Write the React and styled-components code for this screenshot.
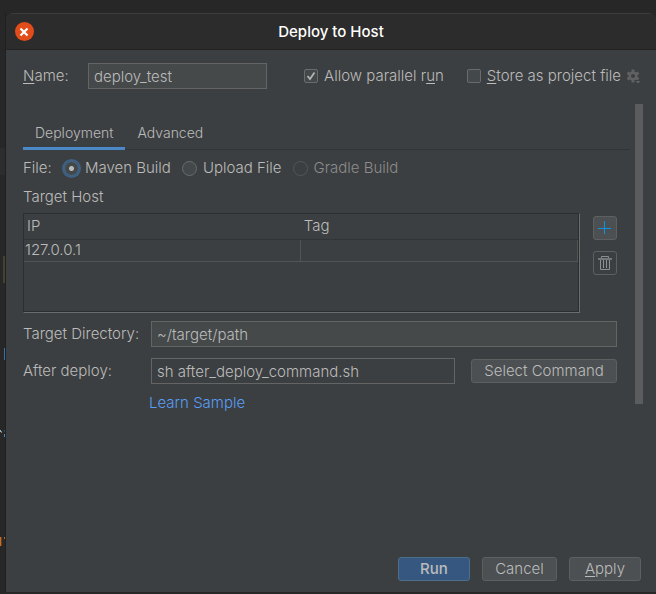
import React, { useState } from 'react';
import styled, { createGlobalStyle } from 'styled-components';

const App = () => {
  const [source, setSource] = useState('maven');
  const [tab, setTab] = useState('deployment');

  return (
    <Desktop>
      <GlobalStyle />
      <Gutter aria-hidden='true'>
        <CaretRow />
        <Change />
        <Selection />
        <svg width='6' height='140' viewBox='0 0 6 140'>
          <path d='M0 1H1V3H0Z' fill='#8fb4c4' />
          <path d='M1 2H2V4H1Z' fill='#7d8a72' />
          <path d='M4 1H5V3H4Z' fill='#2a4a70' />
          <path d='M4 5H5V8H4Z' fill='#4a88c7' />
          <path d='M0 108H1V117H0Z' fill='#c07028' />
          <path d='M1 108H2V117H1Z' fill='#6b3a1c' />
          <path d='M4 108H5V110H4Z' fill='#a5702c' />
        </svg>
      </Gutter>
      <Dialog role='dialog' aria-labelledby='dialog-title'>
        <TitleBar>
          <CloseButton type='button' aria-label='Close'>
            <svg width='10' height='10' viewBox='0 0 10 10'>
              <path d='M1.5 1.5L8.5 8.5M8.5 1.5L1.5 8.5' stroke='#fff' strokeWidth='2.2' />
            </svg>
          </CloseButton>
          <Title id='dialog-title'>Deploy to Host</Title>
        </TitleBar>
        <Body>
          <NameRow>
            <NameLabel htmlFor='name'>
              <u>N</u>ame:
            </NameLabel>
            <NameInput id='name' defaultValue='deploy_test' />
            <ParallelOption>
              <Checkbox type='checkbox' defaultChecked />
              <span>
                Allow parallel r<u>u</u>n
              </span>
            </ParallelOption>
            <Option>
              <Checkbox type='checkbox' />
              <span>
                <u>S</u>tore as project file
              </span>
            </Option>
            <GearButton type='button' aria-label='Storage settings'>
              <Gear />
            </GearButton>
          </NameRow>

          <Scroller>
            <Content>
              <Tabs role='tablist'>
                <Tab
                  type='button'
                  role='tab'
                  aria-selected={tab === 'deployment'}
                  $active={tab === 'deployment'}
                  onClick={() => setTab('deployment')}
                >
                  Deployment
                </Tab>
                <Tab
                  type='button'
                  role='tab'
                  aria-selected={tab === 'advanced'}
                  $active={tab === 'advanced'}
                  onClick={() => setTab('advanced')}
                >
                  Advanced
                </Tab>
              </Tabs>

              <FileRow role='radiogroup' aria-labelledby='file-label'>
                <FileLabel id='file-label'>File:</FileLabel>
                <RadioOption>
                  <Radio
                    type='radio'
                    name='source'
                    checked={source === 'maven'}
                    onChange={() => setSource('maven')}
                  />
                  Maven Build
                </RadioOption>
                <RadioOption>
                  <Radio
                    type='radio'
                    name='source'
                    checked={source === 'upload'}
                    onChange={() => setSource('upload')}
                  />
                  Upload File
                </RadioOption>
                <RadioOption $disabled>
                  <Radio type='radio' name='source' disabled />
                  Gradle Build
                </RadioOption>
              </FileRow>

              <SectionLabel id='hosts-label'>Target Host</SectionLabel>
              <HostRow>
                <TableFrame>
                  <HostTable aria-labelledby='hosts-label'>
                    <thead>
                      <tr>
                        <th>IP</th>
                        <th>Tag</th>
                      </tr>
                    </thead>
                    <tbody>
                      <tr>
                        <td>127.0.0.1</td>
                        <td />
                      </tr>
                    </tbody>
                  </HostTable>
                </TableFrame>
                <HostActions>
                  <IconButton type='button' aria-label='Add host' $filled>
                    <svg width='14' height='14' viewBox='0 0 14 14'>
                      <path d='M6.5 0V13M0 7.5H13' stroke='#0e93dd' fill='none' />
                    </svg>
                  </IconButton>
                  <IconButton type='button' aria-label='Remove host'>
                    <svg width='14' height='14' viewBox='0 0 14 14' fill='none' stroke='#8c8e8f'>
                      <path d='M3.5 2V0.5H10.5V2' />
                      <path d='M0 3H14' strokeWidth='2' stroke='#747677' />
                      <path d='M2.5 4V13.5H11.5V4' />
                      <path d='M5.5 4V12M8.5 4V12' />
                    </svg>
                  </IconButton>
                </HostActions>
              </HostRow>

              <Form>
                <label htmlFor='directory'>Target Directory:</label>
                <Input id='directory' defaultValue='~/target/path' />
                <label htmlFor='command'>After deploy:</label>
                <CommandRow>
                  <Input id='command' defaultValue='sh after_deploy_command.sh' $plain />
                  <CommandButton type='button'>Select Command</CommandButton>
                </CommandRow>
              </Form>
              <SampleLink href='#sample'>Learn Sample</SampleLink>
            </Content>
            <ScrollThumb />
          </Scroller>

          <Footer>
            <Button type='submit' $primary>
              Run
            </Button>
            <CancelButton type='button'>Cancel</CancelButton>
            <Button type='button'>
              <span>
                <u>A</u>pply
              </span>
            </Button>
          </Footer>
        </Body>
      </Dialog>
    </Desktop>
  );
};

const Gear = () => (
  <svg width='14' height='15' viewBox='0 0 14 15'>
    <g stroke='#5f6163' strokeWidth='3'>
      <path d='M6 0.5V13.5M0.4 3.8L11.6 10.2M0.4 10.2L11.6 3.8' />
    </g>
    <circle cx='6' cy='7' r='4.6' fill='#5f6163' />
    <circle cx='6' cy='7' r='2' fill='#3c3f41' />
    <path d='M7.5 11H14V15H9Z' fill='#3c3f41' />
    <path d='M8.5 12H13.5L11 14.5Z' fill='#5f6163' />
  </svg>
);

const GlobalStyle = createGlobalStyle`
  * {
    box-sizing: border-box;
  }

  body {
    margin: 0;
    background: #272727;
    color: #bbbbbb;
    font-family: Inter, 'Liberation Sans', sans-serif;
    font-size: 15px;
    font-weight: 300;
    line-height: 20px;
  }

  button,
  input {
    font: inherit;
    color: inherit;
  }

  u {
    text-underline-offset: 2px;
  }
`;

const Desktop = styled.div`
  display: flex;
  min-height: 100vh;
  padding: 13px 0 2px;
`;

const Gutter = styled.div`
  width: 6px;
  flex: none;
  display: flex;
  flex-direction: column;
  overflow: hidden;
  border-right: 1px solid #202020;
`;

const CaretRow = styled.div`
  height: 27px;
  margin-top: 135px;
  background: #2d2d2d;
`;

const Change = styled.div`
  width: 2px;
  height: 27px;
  margin-top: 81px;
  align-self: flex-end;
  background: #45432f;
`;

const Selection = styled.div`
  width: 1px;
  height: 12px;
  margin-top: 65px;
  margin-bottom: 69px;
  align-self: flex-end;
  background: #3a6fae;
`;

const Dialog = styled.div`
  flex: 1;
  min-width: 0;
  display: flex;
  flex-direction: column;
  overflow: hidden;
  border-radius: 8px 8px 0 0;
  background: #3c3f41;
`;

const TitleBar = styled.header`
  display: grid;
  grid-template-columns: 36px 1fr 36px;
  align-items: center;
  height: 37px;
  background: #2c2c2c;
  border-top: 1px solid #3d3d3d;
  border-bottom: 1px solid #232323;
`;

const CloseButton = styled.button`
  display: flex;
  align-items: center;
  justify-content: center;
  justify-self: center;
  width: 19px;
  height: 19px;
  padding: 0;
  border: 0;
  border-radius: 50%;
  background: #e24c1b;
`;

const Title = styled.h1`
  margin: 0;
  font-size: 15px;
  font-weight: 500;
  text-align: center;
  color: #ffffff;
`;

const Body = styled.form`
  flex: 1;
  display: flex;
  flex-direction: column;
  padding: 13px 13px 11px 17px;
`;

const NameRow = styled.div`
  display: flex;
  align-items: center;
  padding-right: 2px;
`;

const NameLabel = styled.label`
  width: 65px;
`;

const Input = styled.input`
  flex: 1;
  min-width: 0;
  height: 26px;
  padding: 0 5px;
  border: 1px solid #646464;
  border-radius: 0;
  background: ${({ $plain }) => ($plain ? '#3c3f41' : '#45494a')};
  outline: 0;
`;

const NameInput = styled(Input)`
  max-width: 179px;
`;

const Option = styled.label`
  display: flex;
  align-items: center;
  gap: 6px;
  white-space: nowrap;
`;

const ParallelOption = styled(Option)`
  margin-left: auto;
  margin-right: 23px;
`;

const Checkbox = styled.input`
  appearance: none;
  width: 14px;
  height: 14px;
  margin: 0;
  border: 1px solid #6b6b6b;
  border-radius: 2px;
  background: #43494a;

  &:checked {
    background: #43494a
      url("data:image/svg+xml,%3Csvg xmlns='http://www.w3.org/2000/svg' viewBox='0 0 12 12'%3E%3Cpath d='M2.5 6l2.5 3 4.5-6.5' fill='none' stroke='%23b4b4b4' stroke-width='1.8'/%3E%3C/svg%3E");
  }
`;

const GearButton = styled.button`
  display: flex;
  margin-left: 6px;
  padding: 0;
  border: 0;
  background: none;
`;

const Scroller = styled.div`
  display: flex;
  align-items: flex-start;
  gap: 5px;
  margin-top: 15px;
`;

const Content = styled.div`
  flex: 1;
  min-width: 0;
  padding-top: 12px;
`;

const ScrollThumb = styled.div`
  width: 8px;
  height: 300px;
  background: #5b5c5d;
`;

const Tabs = styled.div`
  display: flex;
  height: 34px;
  box-shadow: inset 0 -1px #323537;
`;

const Tab = styled.button`
  padding: 2px 12px 0;
  border: 0;
  border-bottom: 3px solid ${({ $active }) => ($active ? '#4a88c7' : 'transparent')};
  background: none;
  font-size: 14px;
`;

const FileRow = styled.div`
  display: flex;
  align-items: center;
  gap: 10px;
  margin-top: 8px;
`;

const FileLabel = styled.span`
  width: 30px;
`;

const RadioOption = styled.label`
  display: flex;
  align-items: center;
  gap: 5px;
  white-space: nowrap;
  color: ${({ $disabled }) => ($disabled ? '#8c8c8c' : 'inherit')};
`;

const Radio = styled.input`
  appearance: none;
  width: 15px;
  height: 15px;
  margin: 0 1px;
  border: 1px solid #6b6b6b;
  border-radius: 50%;
  background: #43494a;

  &:checked {
    border-color: #466d94;
    background: radial-gradient(circle, #bbbbbb 2px, #43494a 3px);
    box-shadow: 0 0 0 2px #3d6185;
  }

  &:disabled {
    border-color: #545658;
    background: none;
  }
`;

const SectionLabel = styled.div`
  margin-top: 9px;
`;

const HostRow = styled.div`
  display: flex;
  gap: 13px;
  margin-top: 6px;
  margin-right: 13px;
`;

const TableFrame = styled.div`
  flex: 1;
  height: 100px;
  padding-right: 1px;
  border: 1px solid #2b2d2e;
  border-right-color: #6a6c6d;
  border-bottom-color: #6a6c6d;
  box-shadow: inset -1px -1px #2b2d2e;
`;

const HostTable = styled.table`
  width: 100%;
  table-layout: fixed;
  border-collapse: collapse;

  th {
    height: 25px;
    padding: 0 3px;
    border-bottom: 1px solid #323537;
    font-weight: 300;
    text-align: left;
  }

  td {
    height: 22px;
    padding: 0 1px;
    border-right: 1px solid #515355;
    border-bottom: 1px solid #515355;
  }
`;

const HostActions = styled.div`
  display: flex;
  flex-direction: column;
  gap: 11px;
  padding-top: 3px;
`;

const IconButton = styled.button`
  display: flex;
  align-items: center;
  justify-content: center;
  width: 24px;
  height: 24px;
  padding: 0;
  border: 1px solid #5e6060;
  border-radius: 3px;
  background: ${({ $filled }) => ($filled ? '#4c5052' : 'transparent')};
`;

const Form = styled.div`
  display: grid;
  grid-template-columns: 128px 1fr;
  align-items: center;
  row-gap: 11px;
  margin: 8px 13px 0 0;

  label {
    white-space: nowrap;
  }
`;

const CommandRow = styled.div`
  display: flex;
  align-items: center;
  gap: 16px;
`;

const Button = styled.button`
  min-width: 72px;
  height: 24px;
  padding: 0 12px;
  border: 1px solid ${({ $primary }) => ($primary ? '#4c708c' : '#5e6060')};
  border-radius: 3px;
  background: ${({ $primary }) => ($primary ? '#365880' : '#4c5052')};
  font-weight: ${({ $primary }) => ($primary ? 500 : 300)};
  line-height: 20px;
  white-space: nowrap;
`;

const CommandButton = styled(Button)`
  min-width: 146px;
`;

const CancelButton = styled(Button)`
  min-width: 75px;
`;

const SampleLink = styled.a`
  display: inline-block;
  margin: 9px 0 0 126px;
  color: #589df6;
  text-decoration: none;
`;

const Footer = styled.footer`
  display: flex;
  justify-content: flex-end;
  gap: 12px;
  margin-top: auto;
  padding-right: 2px;
`;

export default App;
